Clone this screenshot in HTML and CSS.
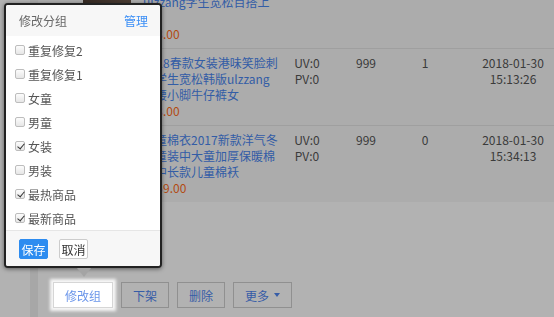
FILE: index.html
```html
<!DOCTYPE html>
<html>
  <head>
    <meta charset="utf-8">
    <title>商品管理</title>
    <link rel="stylesheet" href="styles.css">
  </head>
  <body>
    <div class="page">
      <aside class="side"></aside>
      <main class="content">
        <div class="goods-list">
          <div class="goods-row">
            <span></span>
            <div class="thumb"></div>
            <div class="title">
              <a href="#" class="long">2018春季新款韩版宽松<br>长袖衬衫女学生百搭<br>ulzzang学生宽松百搭上</a>
              <span class="price">¥38.00</span>
            </div>
            <div class="uv">UV:0<br>PV:0</div>
            <div class="sales">999</div>
            <div class="count">2</div>
            <div class="date">2018-01-30<br>15:02:11</div>
          </div>
          <div class="goods-row">
            <span></span>
            <div class="thumb"></div>
            <div class="title">
              <a href="#">2018春款女装港味笑脸刺<br>绣学生宽松韩版ulzzang<br>高腰小脚牛仔裤女</a>
              <span class="price">¥38.00</span>
            </div>
            <div class="uv">UV:0<br>PV:0</div>
            <div class="sales">999</div>
            <div class="count">1</div>
            <div class="date">2018-01-30<br>15:13:26</div>
          </div>
          <div class="goods-row">
            <span></span>
            <div class="thumb"></div>
            <div class="title">
              <a href="#">男童棉衣2017新款洋气冬<br>季童装中大童加厚保暖棉<br>服中长款儿童棉袄</a>
              <span class="price">¥159.00</span>
            </div>
            <div class="uv">UV:0<br>PV:0</div>
            <div class="sales">999</div>
            <div class="count">0</div>
            <div class="date">2018-01-30<br>15:34:13</div>
          </div>
        </div>
        <div class="actions">
          <button class="btn current">修改组</button>
          <button class="btn">下架</button>
          <button class="btn">删除</button>
          <button class="btn">更多 <i class="caret"></i></button>
        </div>
      </main>
    </div>

    <div class="mask"></div>

    <div class="group-pop">
      <div class="pop-head">
        <span>修改分组</span>
        <a href="#">管理</a>
      </div>
      <ul class="pop-list">
        <li><span class="chk"></span>重复修复2</li>
        <li><span class="chk"></span>重复修复1</li>
        <li><span class="chk"></span>女童</li>
        <li><span class="chk"></span>男童</li>
        <li><span class="chk on"></span>女装</li>
        <li><span class="chk"></span>男装</li>
        <li><span class="chk on"></span>最热商品</li>
        <li><span class="chk on"></span>最新商品</li>
      </ul>
      <div class="pop-foot">
        <button class="primary">保存</button>
        <button>取消</button>
      </div>
    </div>
  </body>
</html>
```

FILE: styles.css
```css
* {
  margin: 0;
  padding: 0;
  box-sizing: border-box;
}

html, body {
  height: 100%;
  overflow: hidden;
}

body {
  font-family: "Noto Sans CJK SC", "Microsoft YaHei", sans-serif;
  font-size: 12px;
  color: #555;
  background: #fff;
}

a {
  text-decoration: none;
}

.page {
  display: flex;
  height: 100%;
}

.side {
  width: 38px;
  flex-shrink: 0;
  border-right: 8px solid #f0f0f0;
}

.content {
  flex: 1;
}

.goods-list {
  margin-top: -44px;
}

.goods-row {
  display: grid;
  grid-template-columns: 45px 48px 152px 48px 70px 48px 1fr;
  padding: 6px 0;
  line-height: 16px;
  background: #f7f7f7;
  border-bottom: 1px solid #e4e4e4;
}

.goods-row:last-child {
  border-bottom: none;
}

.thumb {
  width: 48px;
  height: 48px;
  background: linear-gradient(160deg, #8a6e5e, #4e3d34 60%, #7d6657);
}

.title {
  padding-left: 12px;
}

.title a {
  display: block;
  height: 48px;
  color: #4a86ee;
  white-space: nowrap;
}

.title a.long {
  height: 64px;
}

.price {
  color: #ff6c1a;
}

.uv,
.sales,
.count {
  text-align: center;
}

.date {
  text-align: center;
  padding-left: 23px;
}

.actions {
  display: flex;
  gap: 8px;
  padding: 80px 15px 0;
}

.btn {
  display: inline-flex;
  align-items: center;
  gap: 5px;
  height: 26px;
  padding: 0 11px;
  border: 1px solid #cfcfcf;
  background: #fff;
  color: #4f86f0;
  font: inherit;
  cursor: pointer;
}

.btn.current {
  position: relative;
  z-index: 20;
  color: #6a95ea;
  border-color: #d6d6d6;
  box-shadow: 0 0 3px 3px rgba(255, 255, 255, 0.9);
}

.caret {
  width: 0;
  height: 0;
  border-left: 3.5px solid transparent;
  border-right: 3.5px solid transparent;
  border-top: 4px solid currentColor;
}

.mask {
  position: fixed;
  top: 0;
  left: 0;
  right: 0;
  bottom: 0;
  background: rgba(0, 0, 0, 0.3);
  z-index: 10;
}

.group-pop {
  position: absolute;
  left: 4px;
  top: 3px;
  width: 158px;
  background: #fff;
  border: 2px solid #222;
  border-radius: 4px;
  box-shadow: 0 1px 4px rgba(0, 0, 0, 0.5);
  z-index: 30;
}

.group-pop::after {
  content: "";
  position: absolute;
  left: 71px;
  top: calc(100% + 2px);
  border-left: 7px solid transparent;
  border-right: 7px solid transparent;
  border-top: 9px solid #a4a4a4;
}

.pop-head {
  display: flex;
  justify-content: space-between;
  align-items: center;
  height: 31px;
  padding: 0 12px 0 13px;
  background: #f7f7f7;
  color: #666;
  border-radius: 2px 2px 0 0;
}

.pop-head a {
  color: #3a8ef6;
}

.pop-list {
  list-style: none;
  padding-top: 2px;
}

.pop-list li {
  display: flex;
  align-items: center;
  gap: 3px;
  height: 24px;
  padding-left: 9px;
  color: #555;
}

.chk {
  position: relative;
  width: 10px;
  height: 10px;
  border: 1px solid #bdbdbd;
  border-radius: 2px;
  background: linear-gradient(#fcfcfc, #e6e6e6);
}

.chk.on::after {
  content: "";
  position: absolute;
  left: 2.5px;
  top: 0;
  width: 3px;
  height: 6px;
  border: solid #333;
  border-width: 0 1.5px 1.5px 0;
  transform: rotate(40deg);
}

.pop-foot {
  display: flex;
  gap: 11px;
  padding: 8px 13px 7px;
  background: #f7f7f7;
  border-top: 1px solid #e6e6e6;
  border-radius: 0 0 2px 2px;
}

.pop-foot button {
  width: 29px;
  height: 20px;
  font: inherit;
  color: #333;
  background: #fff;
  border: 1px solid #ccc;
  border-radius: 2px;
  cursor: pointer;
}

.pop-foot .primary {
  color: #fff;
  background: #2d8cf0;
  border-color: #2d8cf0;
}
```
